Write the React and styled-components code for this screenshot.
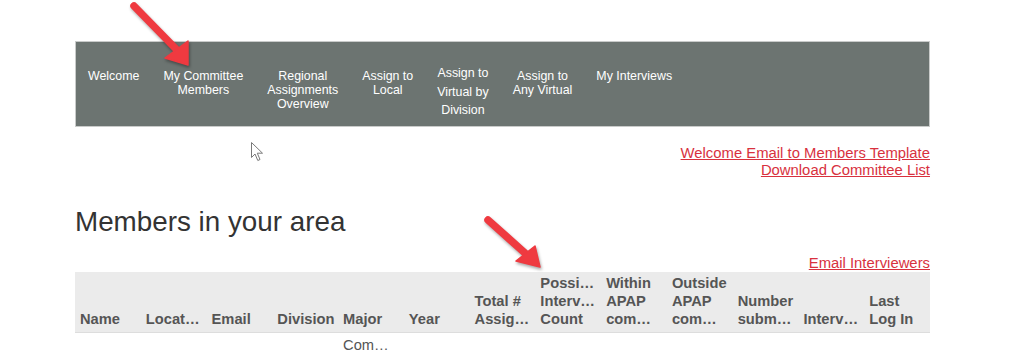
import React from 'react';
import styled, { createGlobalStyle } from 'styled-components';

const GlobalStyle = createGlobalStyle`
  html, body {
    margin: 0;
    padding: 0;
    background: #ffffff;
  }
  body {
    font-family: "Liberation Sans", Arial, sans-serif;
    overflow: hidden;
  }
`;

const Page = styled.div`
  position: relative;
  width: 1024px;
  height: 356px;
  box-sizing: border-box;
  padding: 41px 94px 0 75px;
  overflow: hidden;
`;

const NavBar = styled.nav`
  box-sizing: border-box;
  height: 86px;
  background: #6c7471;
  border: 1px solid #c9cbca;
  display: flex;
  align-items: flex-start;
  padding-top: 27px;
`;

const NavItem = styled.a`
  padding: 0 12px;
  color: #ffffff;
  font-size: 12.4px;
  line-height: ${(p) => (p.tall ? '18.5px' : '14px')};
  margin-top: ${(p) => (p.tall ? '-5px' : '0')};
  text-align: center;
  white-space: nowrap;
  text-decoration: none;
`;

const LinkStack = styled.div`
  display: flex;
  flex-direction: column;
  align-items: flex-end;
  margin-top: 18px;
`;

const RedLink = styled.a`
  color: #d8313e;
  font-size: 14.85px;
  line-height: 17px;
  text-decoration: underline;
  text-underline-offset: 1px;
`;

const Heading = styled.h2`
  margin: 27px 0 0 0;
  font-size: 27.8px;
  line-height: 31px;
  font-weight: normal;
  color: #333333;
`;

const Table = styled.table`
  width: 100%;
  table-layout: fixed;
  border-collapse: collapse;
  font-size: 14.7px;
  color: #555555;
`;

const HeadCell = styled.th`
  background: #ebebeb;
  border-bottom: 1px solid #dddddd;
  padding: 2px 2px 4px 5px;
  vertical-align: bottom;
  text-align: left;
  font-weight: bold;
  line-height: 18px;
  overflow: hidden;
`;

const Cell = styled.td`
  padding: 3px 2px 5px 5px;
  line-height: 18px;
  vertical-align: top;
  white-space: nowrap;
  overflow: hidden;
`;

const Arrow = styled.svg`
  position: absolute;
  left: ${(p) => p.x}px;
  top: ${(p) => p.y}px;
  filter: drop-shadow(1px 2px 1.5px rgba(0, 0, 0, 0.35));
  overflow: visible;
`;

const Cursor = styled.svg`
  position: absolute;
  left: 251px;
  top: 142px;
`;

const navItems = [
  { lines: ['Welcome'] },
  { lines: ['My Committee', 'Members'] },
  { lines: ['Regional', 'Assignments', 'Overview'] },
  { lines: ['Assign to', 'Local'] },
  { lines: ['Assign to', 'Virtual by', 'Division'], tall: true },
  { lines: ['Assign to', 'Any Virtual'] },
  { lines: ['My Interviews'] },
];

const columns = [
  'Name',
  'Locat…',
  'Email',
  'Division',
  'Major',
  'Year',
  'Total # Assig…',
  'Possi… Interv… Count',
  'Within APAP com…',
  'Outside APAP com…',
  'Number subm…',
  'Interv…',
  'Last Log In',
];

const firstRow = ['', '', '', '', 'Com…', '', '', '', '', '', '', '', ''];

function RedArrow({ x, y, tail, tip, wingA, wingB }) {
  return (
    <Arrow x={x} y={y} width="70" height="70" viewBox="0 0 70 70">
      <line
        x1={tail[0]}
        y1={tail[1]}
        x2={(wingA[0] + wingB[0]) / 2}
        y2={(wingA[1] + wingB[1]) / 2}
        stroke="#ef3a40"
        strokeWidth="7.5"
        strokeLinecap="round"
      />
      <polygon
        points={`${wingA[0]},${wingA[1]} ${tip[0]},${tip[1]} ${wingB[0]},${wingB[1]}`}
        fill="#ef3a40"
        stroke="#ef3a40"
        strokeWidth="1.5"
        strokeLinejoin="round"
      />
    </Arrow>
  );
}

export default function App() {
  return (
    <>
      <GlobalStyle />
      <Page>
        <NavBar>
          {navItems.map((item) => (
            <NavItem key={item.lines.join(' ')} tall={item.tall}>
              {item.lines.map((line, i) => (
                <React.Fragment key={line}>
                  {i > 0 && <br />}
                  {line}
                </React.Fragment>
              ))}
            </NavItem>
          ))}
        </NavBar>

        <LinkStack>
          <RedLink>Welcome Email to Members Template</RedLink>
          <RedLink>Download Committee List</RedLink>
        </LinkStack>

        <Heading>Members in your area</Heading>

        <LinkStack>
          <RedLink>Email Interviewers</RedLink>
        </LinkStack>

        <Table>
          <thead>
            <tr>
              {columns.map((c) => (
                <HeadCell key={c}>{c}</HeadCell>
              ))}
            </tr>
          </thead>
          <tbody>
            <tr>
              {firstRow.map((v, i) => (
                <Cell key={i}>{v}</Cell>
              ))}
            </tr>
          </tbody>
        </Table>

        <RedArrow x={128} y={0} tail={[6, 6]} tip={[60, 65]} wingA={[37, 58]} wingB={[60, 41]} />
        <RedArrow x={482} y={214} tail={[6, 6]} tip={[58, 53]} wingA={[34, 47]} wingB={[53, 32]} />

        <Cursor width="13" height="20" viewBox="0 0 13 20">
          <path
            d="M0.5 0.5 L0.5 15.5 L4 12 L6.8 18.5 L9 17.5 L6.3 11.2 L11.5 11.2 Z"
            fill="#ffffff"
            stroke="#7a7a7a"
            strokeWidth="1"
            strokeLinejoin="round"
          />
        </Cursor>
      </Page>
    </>
  );
}
